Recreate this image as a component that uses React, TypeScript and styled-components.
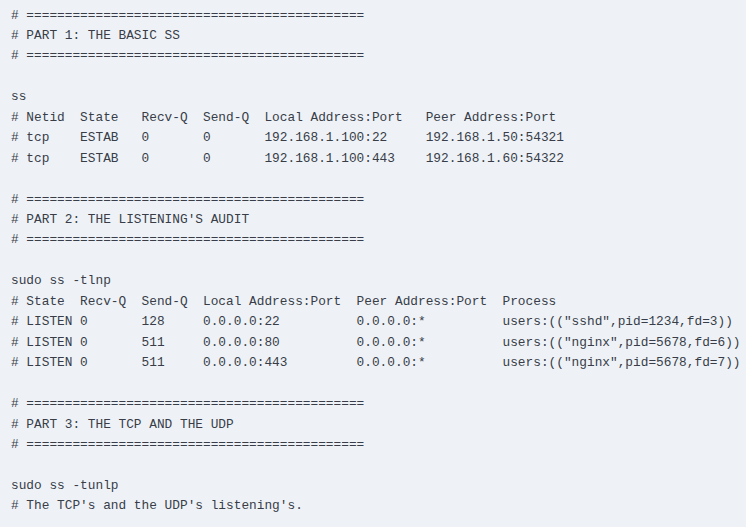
import React from "react";
import styled, { createGlobalStyle } from "styled-components";

const Global = createGlobalStyle`
  html, body { margin: 0; padding: 0; background: #eef2f7; overflow: hidden; }
`;

const Code = styled.pre`
  margin: 0;
  padding: 5.5px 0 16px 11px;
  min-height: 527px;
  box-sizing: border-box;
  background: #eef2f7;
  color: #383d47;
  font-family: "Liberation Mono", monospace;
  font-size: 12.8px;
  line-height: 20.46px;
  white-space: pre;
`;

const SEP = "# " + "=".repeat(44);

const lines = [
  SEP,
  "# PART 1: THE BASIC SS",
  SEP,
  "",
  "ss",
  "# Netid  State   Recv-Q  Send-Q  Local Address:Port   Peer Address:Port",
  "# tcp    ESTAB   0       0       192.168.1.100:22     192.168.1.50:54321",
  "# tcp    ESTAB   0       0       192.168.1.100:443    192.168.1.60:54322",
  "",
  SEP,
  "# PART 2: THE LISTENING'S AUDIT",
  SEP,
  "",
  "sudo ss -tlnp",
  "# State  Recv-Q  Send-Q  Local Address:Port  Peer Address:Port  Process",
  '# LISTEN 0       128     0.0.0.0:22          0.0.0.0:*          users:(("sshd",pid=1234,fd=3))',
  '# LISTEN 0       511     0.0.0.0:80          0.0.0.0:*          users:(("nginx",pid=5678,fd=6))',
  '# LISTEN 0       511     0.0.0.0:443         0.0.0.0:*          users:(("nginx",pid=5678,fd=7))',
  "",
  SEP,
  "# PART 3: THE TCP AND THE UDP",
  SEP,
  "",
  "sudo ss -tunlp",
  "# The TCP's and the UDP's listening's.",
];

export default function App() {
  return (
    <>
      <Global />
      <Code>{lines.join("\n")}</Code>
    </>
  );
}
